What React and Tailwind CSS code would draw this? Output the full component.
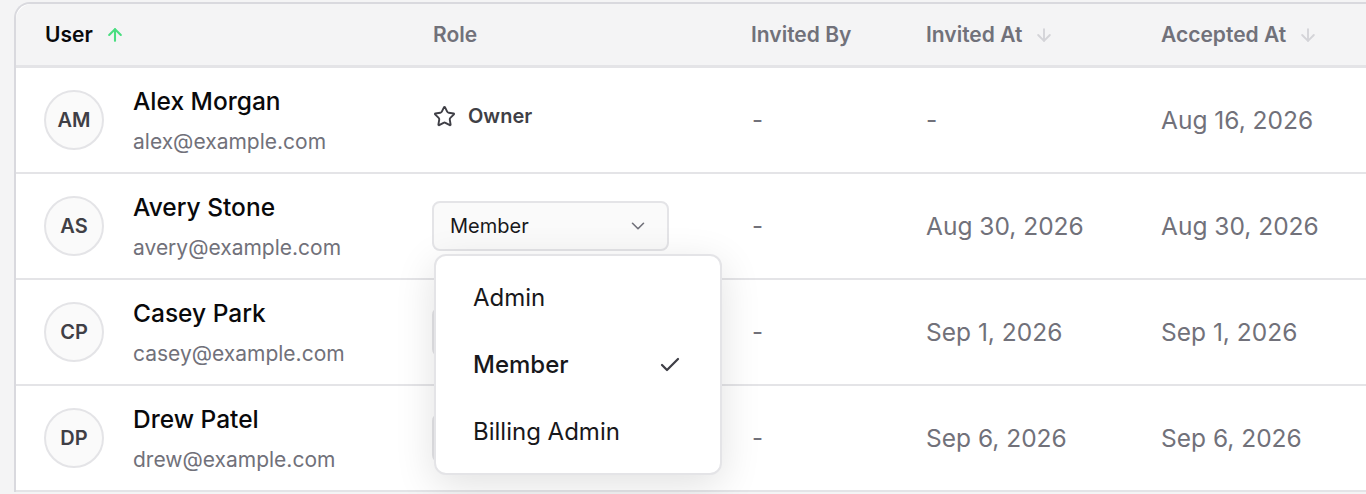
import React from 'react';
import { ArrowUp, ArrowDown, Star, ChevronDown, Check } from 'lucide-react';

const members = [
  { initials: 'AM', name: 'Alex Morgan', email: 'alex@example.com', role: 'Owner', invitedBy: '-', invitedAt: '-', acceptedAt: 'Aug 16, 2026' },
  { initials: 'AS', name: 'Avery Stone', email: 'avery@example.com', role: 'Member', invitedBy: '-', invitedAt: 'Aug 30, 2026', acceptedAt: 'Aug 30, 2026', open: true },
  { initials: 'CP', name: 'Casey Park', email: 'casey@example.com', role: 'Member', invitedBy: '-', invitedAt: 'Sep 1, 2026', acceptedAt: 'Sep 1, 2026' },
  { initials: 'DP', name: 'Drew Patel', email: 'drew@example.com', role: 'Member', invitedBy: '-', invitedAt: 'Sep 6, 2026', acceptedAt: 'Sep 6, 2026' },
];

const roles = ['Admin', 'Member', 'Billing Admin'];

const RoleSelect = ({ value, open }) => (
  <div className="relative">
    <div className="flex h-[50px] w-[237px] items-center justify-between rounded-lg border-2 border-[#e4e4e7] bg-[#fafafa] pl-4 pr-[18px] text-[20px] text-[#18181b]">
      <span>{value}</span>
      <ChevronDown className="h-[22px] w-[22px] text-[#71717a]" strokeWidth={1.75} />
    </div>
    {open && (
      <div className="absolute left-[2px] top-full z-10 mt-[3px] w-[288px] rounded-xl border-2 border-[#e4e4e7] bg-white p-2 shadow-[0_10px_40px_rgba(0,0,0,0.12)]">
        {roles.map((r) => (
          <div
            key={r}
            className={`flex h-[67px] items-center justify-between pl-[29px] pr-[30px] text-[24px] text-[#18181b] ${r === value ? 'font-medium' : ''}`}
          >
            <span>{r}</span>
            {r === value && <Check className="h-6 w-6 text-[#3f3f46]" strokeWidth={2.25} />}
          </div>
        ))}
      </div>
    )}
  </div>
);

export default function App() {
  return (
    <div className="h-[494px] w-[1366px] overflow-hidden bg-[#f4f4f5] pl-[14px] pt-[2px]" style={{ fontFamily: 'Inter, "Noto Sans", sans-serif' }}>
      <div className="w-[1420px] rounded-tl-2xl border-l-2 border-t-2 border-[#d9d9de] bg-white">
        {/* Header */}
        <div className="flex h-[64px] items-center rounded-tl-2xl border-b-[3px] border-[#e4e4e7] bg-[#f4f4f5] text-[21px] font-semibold">
          <div className="flex w-[388px] items-center gap-3 pl-[29px] text-[#09090b]">
            User <ArrowUp className="h-5 w-5 text-[#4ade80]" strokeWidth={2.5} />
          </div>
          <div className="w-[318px] pl-[29px] text-[#71717a]">Role</div>
          <div className="w-[175px] pl-[29px] text-[#71717a]">Invited By</div>
          <div className="flex w-[235px] items-center gap-3 pl-[29px] text-[#71717a]">
            Invited At <ArrowDown className="h-5 w-5 text-[#d4d4d8]" strokeWidth={2.25} />
          </div>
          <div className="flex items-center gap-3 pl-[29px] text-[#71717a]">
            Accepted At <ArrowDown className="h-5 w-5 text-[#d4d4d8]" strokeWidth={2.25} />
          </div>
        </div>

        {/* Rows */}
        {members.map((m) => (
          <div key={m.email} className="flex h-[106px] items-center border-b-2 border-[#e4e4e7]">
            <div className="flex w-[388px] items-center gap-[29px] pl-[28px]">
              <div className="flex h-[60px] w-[60px] items-center justify-center rounded-full border-2 border-[#e4e4e7] bg-[#fafafa] text-[20px] font-semibold text-[#3f3f46]">
                {m.initials}
              </div>
              <div>
                <div className="text-[24.5px] font-medium leading-8 text-[#09090b]">{m.name}</div>
                <div className="mt-[11px] text-[21px] leading-7 text-[#71717a]">{m.email}</div>
              </div>
            </div>
            <div className="w-[318px] pl-[28px]">
              {m.role === 'Owner' ? (
                <div className="-mt-2 flex items-center gap-3 pl-[1px] text-[20px] font-semibold text-[#3f3f46]">
                  <Star className="h-[23px] w-[23px] text-[#3f3f46]" strokeWidth={2} />
                  Owner
                </div>
              ) : (
                <RoleSelect value={m.role} open={m.open} />
              )}
            </div>
            <div className="w-[175px] pl-[30px] text-[24px] text-[#71717a]">{m.invitedBy}</div>
            <div className="w-[235px] pl-[29px] text-[24.5px] text-[#71717a]">{m.invitedAt}</div>
            <div className="pl-[29px] text-[24.5px] text-[#71717a]">{m.acceptedAt}</div>
          </div>
        ))}
      </div>
    </div>
  );
}
